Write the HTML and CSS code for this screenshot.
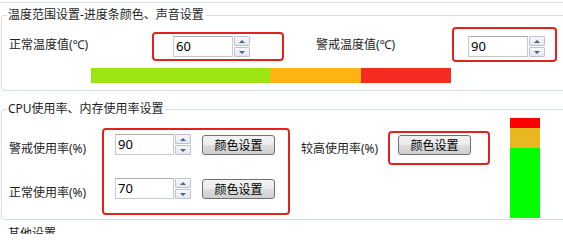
FILE: index.html
```html
<!DOCTYPE html>
<html lang="zh-CN">
<head>
<meta charset="utf-8">
<title>设置</title>
<link rel="stylesheet" href="styles.css">
</head>
<body>
<div class="page">
  <div class="prev-group"></div>

  <fieldset class="group group-temp">
    <legend>温度范围设置-进度条颜色、声音设置</legend>
    <div class="temp-row">
      <span class="lbl lbl-normal-temp">正常温度值(℃)</span>
      <div class="mark mark-t1">
        <div class="spin">
          <div class="spin-input">60</div>
          <div class="spin-btns">
            <span class="sbtn sbtn-up"><i class="arr arr-up"></i></span>
            <span class="sbtn sbtn-down"><i class="arr arr-down"></i></span>
          </div>
        </div>
      </div>
      <span class="lbl lbl-warn-temp">警戒温度值(℃)</span>
      <div class="mark mark-t2">
        <div class="spin">
          <div class="spin-input">90</div>
          <div class="spin-btns">
            <span class="sbtn sbtn-up"><i class="arr arr-up"></i></span>
            <span class="sbtn sbtn-down"><i class="arr arr-down"></i></span>
          </div>
        </div>
      </div>
    </div>
    <div class="hbar">
      <span class="hseg hseg-green"></span>
      <span class="hseg hseg-orange"></span>
      <span class="hseg hseg-red"></span>
    </div>
  </fieldset>

  <fieldset class="group group-cpu">
    <legend>CPU使用率、内存使用率设置</legend>
    <div class="cpu-row">
      <div class="cpu-labels">
        <span class="lbl">警戒使用率(%)</span>
        <span class="lbl">正常使用率(%)</span>
      </div>
      <div class="mark mark-c1">
        <div class="cpu-line">
          <div class="spin spin-cpu">
            <div class="spin-input">90</div>
            <div class="spin-btns">
              <span class="sbtn sbtn-up"><i class="arr arr-up"></i></span>
              <span class="sbtn sbtn-down"><i class="arr arr-down"></i></span>
            </div>
          </div>
          <button class="btn" type="button">颜色设置</button>
        </div>
        <div class="cpu-line">
          <div class="spin spin-cpu">
            <div class="spin-input">70</div>
            <div class="spin-btns">
              <span class="sbtn sbtn-up"><i class="arr arr-up"></i></span>
              <span class="sbtn sbtn-down"><i class="arr arr-down"></i></span>
            </div>
          </div>
          <button class="btn" type="button">颜色设置</button>
        </div>
      </div>
      <span class="lbl lbl-high">较高使用率(%)</span>
      <div class="mark mark-c2">
        <button class="btn" type="button">颜色设置</button>
      </div>
      <div class="vbar">
        <span class="vseg vseg-red"></span>
        <span class="vseg vseg-orange"></span>
        <span class="vseg vseg-green"></span>
      </div>
    </div>
  </fieldset>

  <fieldset class="group group-other">
    <legend>其他设置</legend>
    <div class="other-body"></div>
  </fieldset>
</div>
</body>
</html>
```

FILE: styles.css
```css
html, body {
  margin: 0;
  padding: 0;
  background: #ffffff;
}

body {
  width: 563px;
  height: 234px;
  overflow: hidden;
  font-family: "Noto Sans", "Noto Sans CJK SC", sans-serif;
  font-size: 12px;
  color: #1e1e1e;
}

.page {
  width: 563px;
  height: 234px;
  overflow: hidden;
}

.prev-group {
  height: 2px;
  border-bottom: 1px solid #d5dde3;
}

.group {
  margin: 0 0 0 1px;
  padding: 0;
  width: 640px;
  box-sizing: border-box;
  border: 1px solid #d5dde3;
  border-radius: 3px;
  min-width: 0;
}

.group legend {
  margin-left: 5px;
  padding: 0 2px 0 1px;
  line-height: 16px;
  height: 16px;
  font-size: 12px;
  color: #1e1e1e;
  font-family: "Noto Sans", "Noto Sans CJK SC", sans-serif;
}

.lbl {
  display: block;
  line-height: 16px;
  height: 16px;
  white-space: nowrap;
}

/* group 1 */
.group-temp {
  margin-top: 4px;
  padding-bottom: 7px;
}

.temp-row {
  display: flex;
  align-items: flex-start;
  margin-top: 4px;
}

.lbl-normal-temp {
  width: 150px;
  box-sizing: border-box;
  padding-left: 7px;
  margin-top: 10px;
}

.lbl-warn-temp {
  width: 168px;
  box-sizing: border-box;
  padding-left: 32px;
  margin-top: 10px;
}

.mark {
  border: 2px solid #e2231d;
  border-radius: 4px;
}

.mark-t1 {
  margin-top: 5px;
  padding: 2px 32px 2px 19px;
}

.mark-t2 {
  padding: 7px 10px 3px 14px;
}

.spin {
  display: flex;
  height: 21px;
}

.spin-input {
  width: 60px;
  height: 21px;
  box-sizing: border-box;
  border: 1px solid #c5c9cf;
  border-top-color: #abadb3;
  background: #ffffff;
  padding-left: 2px;
  line-height: 19px;
  font-size: 13px;
  color: #000000;
}

.spin-btns {
  display: flex;
  flex-direction: column;
  justify-content: space-between;
  width: 16px;
  height: 21px;
  margin-left: 1px;
}

.sbtn {
  display: flex;
  align-items: center;
  justify-content: center;
  height: 10px;
  box-sizing: border-box;
  border: 1px solid #bcc3cd;
  border-radius: 1px;
  background: linear-gradient(#f7f8fa, #e4e8ee);
}

.arr {
  display: block;
  width: 0;
  height: 0;
  border-left: 3px solid transparent;
  border-right: 3px solid transparent;
}

.arr-up {
  border-bottom: 3px solid #4d6185;
}

.arr-down {
  border-top: 3px solid #4d6185;
}

.hbar {
  display: flex;
  margin: 6px 0 0 89px;
  height: 15px;
}

.hseg {
  display: block;
  height: 15px;
}

.hseg-green { width: 179px; background: #9be612; }
.hseg-orange { width: 91px; background: #fcb414; }
.hseg-red { width: 90px; background: #f52a20; }

/* group 2 */
.group-cpu {
  margin-top: 10px;
  padding-bottom: 1px;
}

.cpu-row {
  display: flex;
  align-items: flex-start;
  margin-top: 1px;
}

.cpu-labels {
  width: 100px;
  box-sizing: border-box;
  padding-left: 7px;
  margin-top: 23px;
  display: flex;
  flex-direction: column;
  gap: 28px;
}

.mark-c1 {
  margin-top: 10px;
  padding: 4px 13px 14px 11px;
  display: flex;
  flex-direction: column;
  gap: 23px;
}

.cpu-line {
  display: flex;
  align-items: center;
}

.spin-cpu .spin-input {
  width: 59px;
}

.btn {
  margin: 0 0 0 11px;
  width: 73px;
  height: 20px;
  box-sizing: border-box;
  border: 1px solid #707070;
  border-radius: 3px;
  background: linear-gradient(#f3f3f3 0%, #ebebeb 48%, #dddddd 52%, #cfcfcf 100%);
  font-family: "Noto Sans CJK SC", sans-serif;
  font-size: 12px;
  line-height: 16px;
  color: #000000;
  padding: 0;
}

.lbl-high {
  width: 98px;
  box-sizing: border-box;
  padding-left: 11px;
  margin-top: 23px;
}

.mark-c2 {
  margin-top: 13px;
  padding: 2px 17px 8px 8px;
}

.mark-c2 .btn {
  margin-left: 0;
}

.vbar {
  display: flex;
  flex-direction: column;
  width: 30px;
  margin-left: 20px;
}

.vseg { display: block; width: 30px; }
.vseg-red { height: 10px; background: #ff0000; }
.vseg-orange { height: 20px; background: #e9b71f; }
.vseg-green { height: 70px; background: #00ff00; }

/* group 3 */
.group-other {
  margin-top: 6px;
}

.other-body {
  height: 40px;
}
```
